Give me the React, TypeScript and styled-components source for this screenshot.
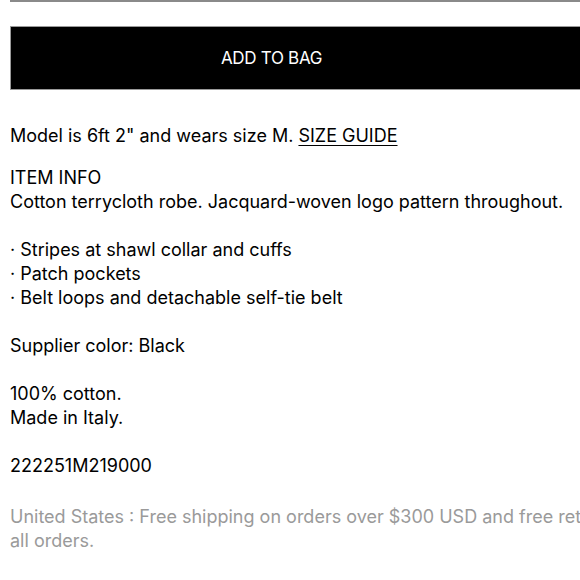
import React from 'react';
import styled, { createGlobalStyle } from 'styled-components';

const GlobalStyle = createGlobalStyle`
  html, body {
    margin: 0;
    padding: 0;
    background: #fff;
    overflow: hidden;
  }
  body {
    font-family: Inter, 'Liberation Sans', Arial, sans-serif;
  }
`;

const StyledPage = styled.div`
  width: 620px;
  padding-left: 10px;
  color: #000;
  font-size: 18px;
  line-height: 24px;
`;

const StyledRule = styled.div`
  height: 0;
  border-top: 2px solid #8a8a8a;
`;

const StyledButton = styled.button`
  display: flex;
  align-items: center;
  justify-content: center;
  box-sizing: border-box;
  width: 100%;
  height: 64px;
  margin-top: 24px;
  padding: 0 98px 0 0;
  background: #000;
  color: #fff;
  border: 1px solid #9a9a9a;
  border-right: none;
  font-family: inherit;
  font-size: 17px;
  letter-spacing: -0.3px;
  cursor: pointer;
`;

const StyledBlock = styled.p<{ $gap?: number; $muted?: boolean }>`
  margin: ${({ $gap }) => $gap ?? 24}px 0 0;
  color: ${({ $muted }) => ($muted ? '#9a9a9a' : '#000')};
  white-space: nowrap;
`;

const StyledLink = styled.a`
  color: inherit;
  text-decoration: underline;
  text-underline-offset: 3px;
`;

const bullets = [
  'Stripes at shawl collar and cuffs',
  'Patch pockets',
  'Belt loops and detachable self-tie belt',
];

const App = () => {
  return (
    <>
      <GlobalStyle />
      <StyledPage>
        <StyledRule />
        <StyledButton>ADD TO BAG</StyledButton>
        <StyledBlock $gap={34}>
          Model is 6ft 2" and wears size M. <StyledLink href="#">SIZE GUIDE</StyledLink>
        </StyledBlock>
        <StyledBlock $gap={18}>
          ITEM INFO
          <br />
          Cotton terrycloth robe. Jacquard-woven logo pattern throughout.
        </StyledBlock>
        <StyledBlock>
          {bullets.map((b) => (
            <React.Fragment key={b}>
              · {b}
              <br />
            </React.Fragment>
          ))}
        </StyledBlock>
        <StyledBlock>Supplier color: Black</StyledBlock>
        <StyledBlock>
          100% cotton.
          <br />
          Made in Italy.
        </StyledBlock>
        <StyledBlock>222251M219000</StyledBlock>
        <StyledBlock $gap={27} $muted>
          United States : Free shipping on orders over $300 USD and free returns on
          <br />
          all orders.
        </StyledBlock>
      </StyledPage>
    </>
  );
};

export default App;
